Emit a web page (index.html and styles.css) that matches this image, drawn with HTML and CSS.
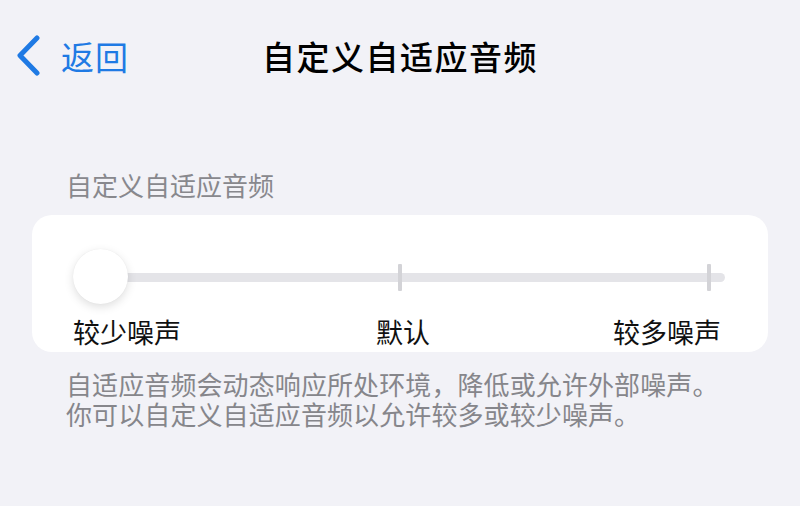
FILE: index.html
```html
<!DOCTYPE html>
<html lang="zh-CN">
<head>
<meta charset="utf-8">
<link rel="stylesheet" href="styles.css">
</head>
<body>
<header class="nav">
  <a class="back">
    <svg class="chev" width="26" height="42" viewBox="0 0 26 42"><path d="M21 3 L4 20.5 L21 38" fill="none" stroke="#1f7ae4" stroke-width="5" stroke-linecap="round" stroke-linejoin="round"/></svg>
    <span class="back-text">返回</span>
  </a>
  <h1 class="title">自定义自适应音频</h1>
  <div class="spacer"></div>
</header>
<main>
  <div class="section-head">自定义自适应音频</div>
  <section class="card">
    <div class="slider">
      <div class="track"></div>
      <span class="tick tick-mid"></span>
      <span class="tick tick-end"></span>
      <span class="thumb"></span>
    </div>
    <div class="labels">
      <span>较少噪声</span>
      <span class="mid">默认</span>
      <span>较多噪声</span>
    </div>
  </section>
  <p class="footer">自适应音频会动态响应所处环境，降低或允许外部噪声。<br>你可以自定义自适应音频以允许较多或较少噪声。</p>
</main>
</body>
</html>
```
FILE: styles.css
```css
* { box-sizing: border-box; }
html, body {
  margin: 0;
  padding: 0;
  background: #f2f2f7;
  font-family: "Noto Sans CJK SC", "Noto Sans", sans-serif;
  width: 800px;
  height: 506px;
  overflow: hidden;
}
.nav {
  height: 112px;
  display: grid;
  grid-template-columns: 1fr auto 1fr;
  align-items: center;
}
.back {
  display: flex;
  align-items: center;
  padding-left: 16px;
  color: #1f7ae4;
}
.chev { display: block; margin-right: 19px; }
.back-text {
  font-size: 33px;
  line-height: 40px;
  letter-spacing: 1px;
}
.title {
  margin: 0;
  font-size: 33px;
  line-height: 40px;
  font-weight: 500;
  color: #000;
  letter-spacing: 1.5px;
}
.section-head {
  margin-top: 58px;
  padding-left: 66px;
  font-size: 26px;
  line-height: 30px;
  color: #88888d;
}
.card {
  margin: 15px 32px 0;
  height: 137px;
  background: #fff;
  border-radius: 20px;
  padding-top: 58px;
}
.slider {
  position: relative;
  margin: 0 43px 0 68px;
  height: 9px;
}
.track {
  height: 9px;
  border-radius: 5px;
  background: #e4e4e8;
}
.tick {
  position: absolute;
  top: -9px;
  width: 4px;
  height: 27px;
  border-radius: 1px;
  background: #d3d3d7;
}
.tick-mid { left: 298px; }
.tick-end { left: 607px; }
.thumb {
  position: absolute;
  left: -27px;
  top: -24px;
  width: 55px;
  height: 55px;
  border-radius: 50%;
  background: #fff;
  box-shadow: 0 3px 10px rgba(0,0,0,0.13), 0 0 1px rgba(0,0,0,0.08);
}
.labels {
  margin-top: 35px;
  padding: 0 47px 0 41px;
  display: flex;
  justify-content: space-between;
  font-size: 27px;
  line-height: 30px;
  color: #111;
}
.labels .mid { margin-left: 12px; }
.footer {
  margin: 17px 0 0;
  padding-left: 66px;
  font-size: 26px;
  line-height: 30px;
  letter-spacing: 0.1px;
  color: #86868b;
}
```
